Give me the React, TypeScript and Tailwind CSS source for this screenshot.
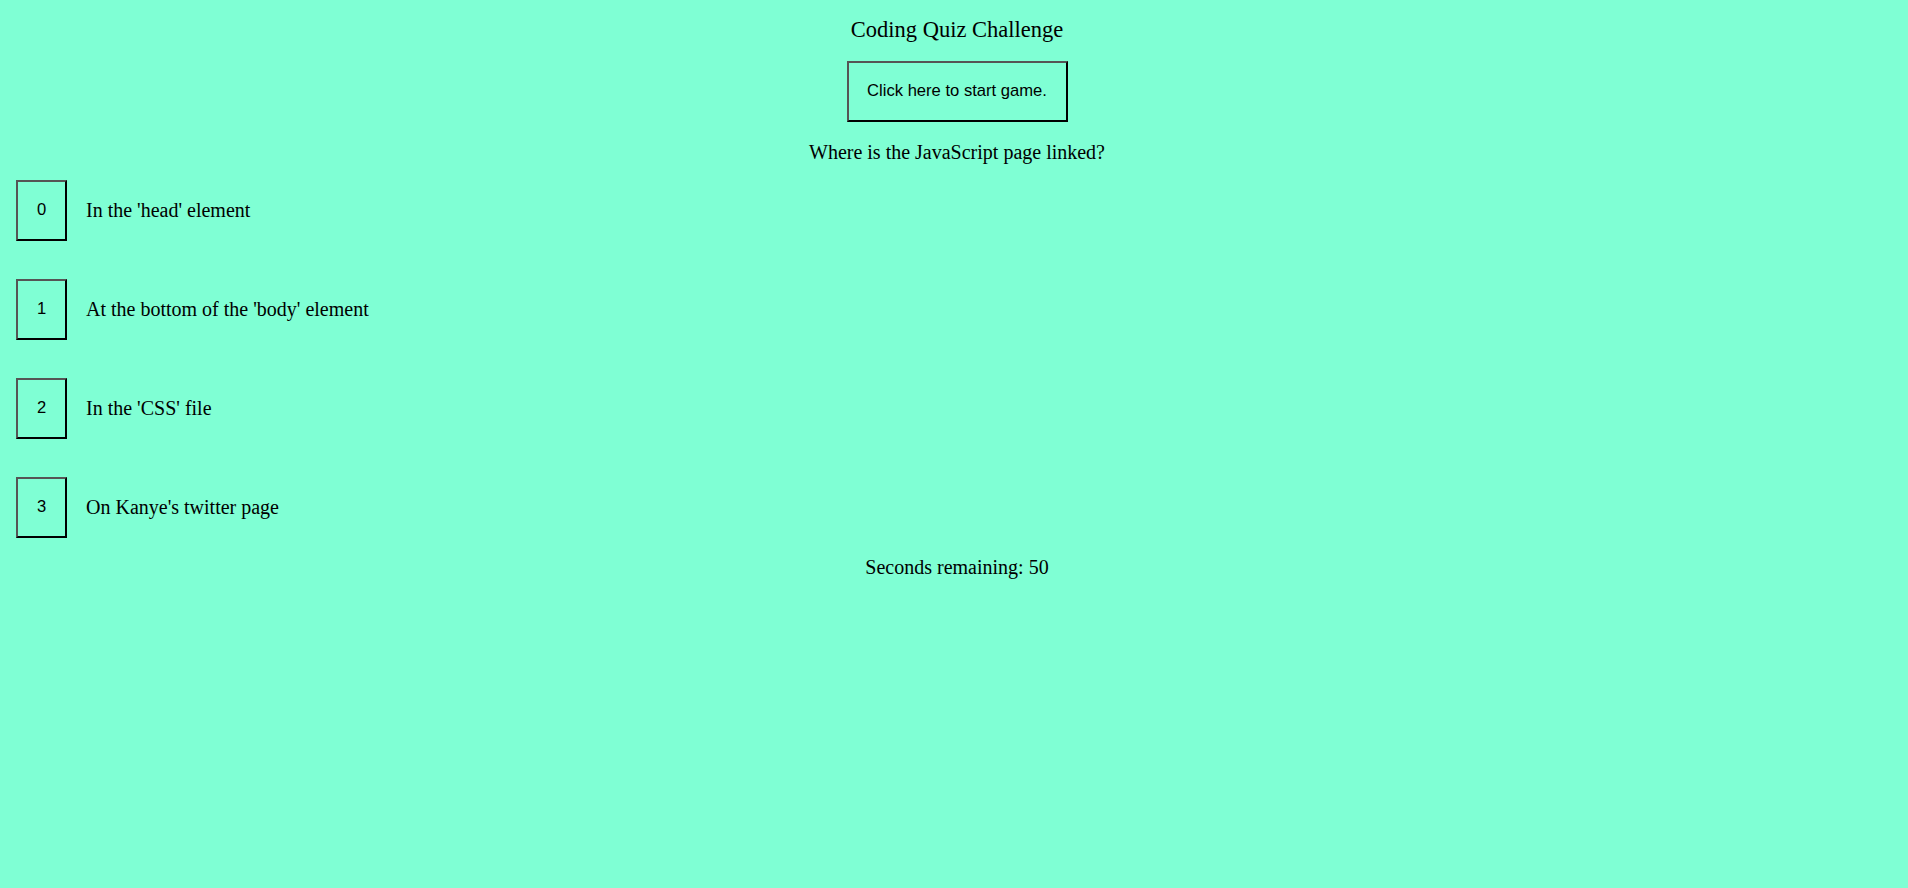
export default function App() {
    const answers = [
        "In the 'head' element",
        "At the bottom of the 'body' element",
        "In the 'CSS' file",
        "On Kanye's twitter page",
    ];

    return (
        <div className="min-h-[888px] w-full bg-[#7fffd4] text-black font-['Liberation_Serif',serif]">
            <h1 className="pt-[17px] pl-[6px] text-center text-[22.5px] leading-[26px]">
                Coding Quiz Challenge
            </h1>
            <div className="mt-[18px] flex justify-center pl-[6px]">
                <button className="h-[61px] w-[221px] border-2 border-t-[#555] border-l-[#555] border-r-black border-b-black bg-transparent font-['Liberation_Sans',sans-serif] text-[16.6px]">
                    Click here to start game.
                </button>
            </div>
            <p className="mt-[19px] pl-[6px] text-center text-[20px] leading-[23px]">
                Where is the JavaScript page linked?
            </p>
            <ul className="mt-[16px] flex flex-col gap-[38px] pl-[16px]">
                {answers.map((text, i) => (
                    <li key={i} className="flex items-center gap-[19px]">
                        <button className="h-[61px] w-[51px] border-2 border-t-[#555] border-l-[#555] border-r-black border-b-black bg-transparent font-['Liberation_Sans',sans-serif] text-[16.6px]">
                            {i}
                        </button>
                        <span className="text-[20px] leading-[23px]">{text}</span>
                    </li>
                ))}
            </ul>
            <p className="mt-[18px] pl-[6px] text-center text-[20px] leading-[23px]">
                Seconds remaining: 50
            </p>
        </div>
    );
}
